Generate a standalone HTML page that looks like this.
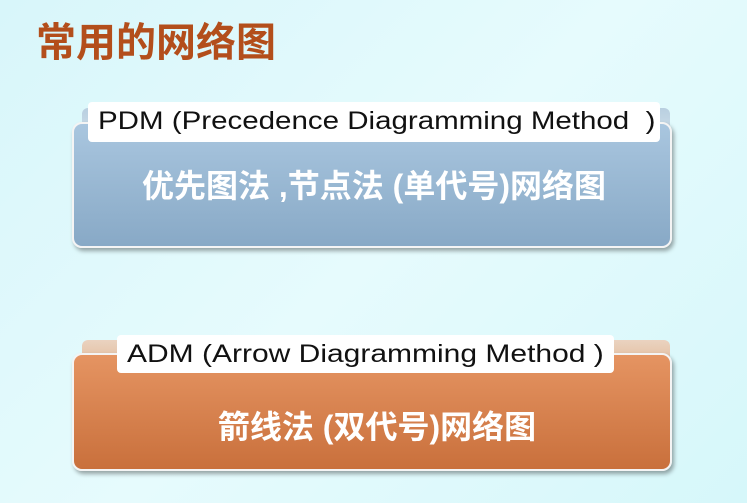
<!DOCTYPE html>
<html><head><meta charset="utf-8"><style>
body{margin:0;width:747px;height:503px;overflow:hidden;background:linear-gradient(135deg,#d8f6fa 0%,#e6fbfd 50%,#d6f7fa 100%);font-family:"Liberation Sans","Noto Sans CJK SC",sans-serif;position:relative}
.t{position:absolute;left:36px;top:18px;font-size:40px;font-weight:bold;color:#b34e1b;line-height:50px}
.box{position:absolute;border-radius:10px;border:2px solid #f4f4f4;box-shadow:2px 3px 4px rgba(0,0,0,.35)}
.back{position:absolute;border-radius:6px}
.lab{position:absolute;background:#fff;border-radius:4px;font-size:25px;color:#111;line-height:38px;padding-left:10px;box-sizing:border-box;white-space:nowrap}
.lab span{display:inline-block;transform-origin:0 50%}
.cn{position:absolute;color:#fff;font-weight:bold;font-size:32px;line-height:40px;text-align:center;width:100%;left:0}
</style></head><body>
<div class="t">常用的网络图</div>

<div class="back" style="left:82px;top:108px;width:588px;height:30px;background:linear-gradient(#b9cfe0,#cfe0ea)"></div>
<div class="box" style="left:72px;top:122px;width:596px;height:122px;background:linear-gradient(#a9c6df,#88a9c6)">
<div class="cn" style="top:42px;left:2px">优先图法 ,节点法 (单代号)网络图</div></div>
<div class="lab" style="left:88px;top:102px;width:572px;height:40px"><span style="transform:scaleX(1.18)">PDM (Precedence Diagramming Method &nbsp;)</span></div>

<div class="back" style="left:82px;top:340px;width:588px;height:28px;background:linear-gradient(#ead3c0,#e2b898)"></div>
<div class="box" style="left:72px;top:353px;width:596px;height:114px;background:linear-gradient(#e59462,#c9703c)">
<div class="cn" style="top:52px;left:5px">箭线法 (双代号)网络图</div></div>
<div class="lab" style="left:117px;top:335px;width:497px;height:38px"><span style="transform:scaleX(1.2)">ADM (Arrow Diagramming Method )</span></div>
</body></html>
